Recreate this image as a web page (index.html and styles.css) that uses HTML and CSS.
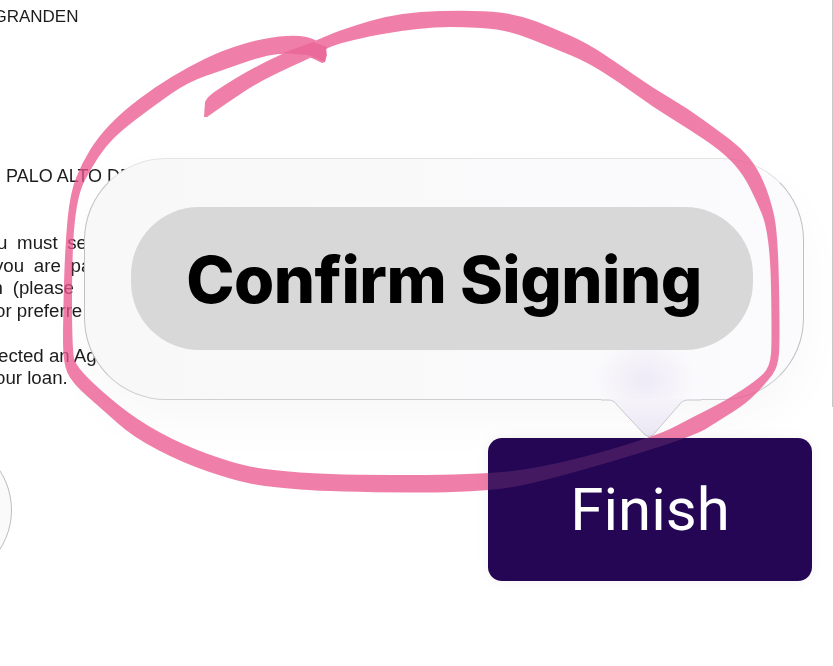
FILE: index.html
```html
<!DOCTYPE html>
<html lang="en">
<head>
<meta charset="utf-8">
<title>Confirm Signing</title>
<link rel="stylesheet" href="styles.css">
</head>
<body>
<main class="stage">
  <section class="doc">
    <p class="line top-line">GRANDEN</p>
    <p class="line head-line">PALO ALTO DE</p>
    <div class="para">
      <p class="line wide off-u">u must se</p>
      <p class="line wide off-you">you are pa</p>
      <p class="line wide off-n">n (please</p>
      <p class="line off-or">or preferre</p>
    </div>
    <div class="para">
      <p class="line off-ected">ected an Ag</p>
      <p class="line off-or">our loan.</p>
    </div>
  </section>

  <div class="side-circle"></div>

  <div class="callout">
    <div class="popover">
      <div class="pill">Confirm Signing</div>
    </div>
    <svg class="arrow" viewBox="0 0 100 40" aria-hidden="true">
      <defs>
        <linearGradient id="arrowFill" x1="0" y1="0" x2="0" y2="1">
          <stop offset="0" stop-color="#f6f4fa"/>
          <stop offset="1" stop-color="#ebe6f5"/>
        </linearGradient>
      </defs>
      <path d="M0 1 H6 C11 1 13 2 16 6 L44 36 Q48 39 52 36 L78 6 C81 2 84 1 88 1 H100 V0 H0 Z" fill="url(#arrowFill)"/>
      <path d="M0 1 H6 C11 1 13 2 16 6 L44 36 Q48 39 52 36 L78 6 C81 2 84 1 88 1 H100" fill="none" stroke="#c8c8cc" stroke-width="1"/>
    </svg>
    <button class="finish" type="button">
      <svg class="finish-mark" viewBox="488 438 324 143" aria-hidden="true"><use href="#mark"/></svg>
      <span class="finish-label">Finish</span>
    </button>
  </div>

  <svg class="annotation" viewBox="0 0 833 666" aria-hidden="true">
    <path id="mark" d="M204 117 L205 102 Q207 97 215 91.5 Q240 75 261.5 64 Q283 53 298 47.5 Q313 42 326.5 36 Q340 30 370 21 Q400 12 440 11 Q480 10 500 12.5 Q520 15 536.5 21.5 Q553 28 570 35.5 Q587 43 603.5 54 Q620 65 636.5 76.5 Q653 88 670 98 Q687 108 703.5 120 Q720 132 730 139.5 Q740 147 748.5 157 Q757 167 763.5 182 Q770 197 774 215 Q778 233 779 286 Q780 340 779 353.5 Q778 367 772.5 374.5 Q767 382 757 392.5 Q747 403 733.5 411.5 Q720 420 706.5 428.5 Q693 437 626.5 457 Q560 477 523.5 485 Q487 493 410 492.5 Q333 492 300 489.5 Q267 487 250 483.5 Q233 480 208 471.5 Q183 463 158 450 Q133 437 118 423.5 Q103 410 87.5 396.5 Q72 383 67.5 373 Q63 363 63 341.5 Q63 320 64 283.5 Q65 247 67.5 220 Q70 193 76 178 Q82 163 90 150 Q98 137 110 124.5 Q122 112 138.5 99.5 Q155 87 171.5 77 Q188 67 205.5 58.5 Q223 50 245 43.5 Q267 37 287 36 Q307 35 317 41 Q327 47 327 55 L325 62 L322 63 Q308 55 294 54 Q280 53 268.5 55.5 Q257 58 240 64 Q223 70 205.5 76 Q188 82 171.5 93.5 Q155 105 138.5 117.5 Q122 130 113.5 138.5 Q105 147 98.5 157 Q92 167 85 180 Q78 193 75 220 Q72 247 72 300 Q72 353 74.5 360 Q77 367 88.5 378.5 Q100 390 118.5 405 Q137 420 160 432.5 Q183 445 208 454 Q233 463 250 466.5 Q267 470 300 472.5 Q333 475 410 475 Q487 475 523.5 469.5 Q560 464 608.5 450 Q657 436 675 426.5 Q693 417 710 408.5 Q727 400 742 390 Q757 380 763.5 373.5 Q770 367 771 353.5 Q772 340 771 286.5 Q770 233 761.5 213 Q753 193 746.5 181.5 Q740 170 730 160 Q720 150 703.5 139 Q687 128 670 117.5 Q653 107 636.5 95 Q620 83 603.5 72.5 Q587 62 570 55 Q553 48 533 40 Q513 32 496.5 29.5 Q480 27 450 27 Q420 27 380 34.5 Q340 42 328 48 Q317 55 303.5 61 Q290 67 273.5 75 Q257 83 242 93 Q227 103 217 110 L207 117 Z"/>
    <path class="overlap" d="M283 53 L313 42 L327 47 L325 62 L308 55 Z"/>
  </svg>
</main>
</body>
</html>
```

FILE: styles.css
```css
* {
  box-sizing: border-box;
}

html,
body {
  margin: 0;
  background: #fff;
}

.stage {
  position: relative;
  width: 833px;
  height: 666px;
  overflow: hidden;
  background: #fff;
}

.doc {
  height: 407px;
  padding-top: 6px;
  border-right: 1px solid #c8c8c8;
  font-family: "Liberation Sans", Arial, sans-serif;
  font-size: 18.7px;
  line-height: 22.5px;
  color: #1c1c1c;
  filter: blur(0.3px);
}

.line {
  margin: 0;
  white-space: nowrap;
}

.top-line {
  margin-left: -6.6px;
  font-size: 17px;
}

.head-line {
  margin-top: 136.5px;
  margin-left: 6px;
  font-size: 18px;
}

.para {
  margin-top: 22.5px;
}

.head-line + .para {
  margin-top: 44.5px;
}

.wide {
  word-spacing: 4.5px;
}

.off-u {
  margin-left: -3px;
}

.off-you {
  margin-left: -6px;
}

.off-n {
  margin-left: -7.4px;
}

.off-or {
  margin-left: -5px;
}

.off-ected {
  margin-left: -2px;
}

.side-circle {
  position: absolute;
  left: -134px;
  top: 437px;
  width: 146px;
  height: 146px;
  border: 1px solid #bdbdbd;
  border-radius: 50%;
  background: #fafafa;
}

.callout {
  position: absolute;
  left: 84px;
  top: 158px;
  display: flex;
  flex-direction: column;
  align-items: flex-start;
}

.popover {
  display: flex;
  align-items: center;
  justify-content: center;
  width: 720px;
  height: 242px;
  padding-right: 4px;
  padding-bottom: 1px;
  border: 1px solid #c0c0c4;
  border-top-color: #e4e4e4;
  border-bottom-color: #cfcfd2;
  border-radius: 82px;
  background:
    radial-gradient(ellipse 50px 42px at 78% 92%, #eeeaf6 0, rgba(238, 234, 246, 0) 100%),
    linear-gradient(90deg, #f8f8f8 0, #f9f9fa 45%, #fbfafd 100%);
  box-shadow: 0 22px 50px rgba(0, 0, 0, 0.03);
}

.pill {
  display: flex;
  align-items: center;
  justify-content: center;
  width: 622px;
  height: 143px;
  padding-top: 2px;
  padding-left: 4px;
  border-radius: 68px;
  background: #d8d8d8;
  font-family: Inter, "Liberation Sans", sans-serif;
  font-size: 65px;
  font-weight: 800;
  letter-spacing: -0.5px;
  color: #000;
  white-space: nowrap;
}

.arrow {
  display: block;
  width: 100px;
  height: 40px;
  margin-top: -1px;
  margin-left: 517px;
}

.finish {
  position: relative;
  z-index: 2;
  width: 324px;
  height: 143px;
  margin-top: -1px;
  margin-left: 404px;
  padding: 0;
  overflow: hidden;
  border: 0;
  border-radius: 14px;
  background: #240654;
  box-shadow: 0 0 14px rgba(0, 0, 0, 0.05);
  font-family: Roboto, "Liberation Sans", sans-serif;
  font-size: 60px;
  font-weight: 450;
  color: #fff;
}

.finish-mark {
  position: absolute;
  inset: 0;
  width: 100%;
  height: 100%;
  fill: #f07fa8;
  opacity: 0.16;
}

.finish-label {
  position: relative;
}

.annotation {
  position: absolute;
  inset: 0;
  z-index: 1;
  width: 833px;
  height: 666px;
  pointer-events: none;
  fill: rgba(234, 84, 140, 0.75);
}

.overlap {
  fill: rgba(226, 70, 130, 0.35);
}
```
